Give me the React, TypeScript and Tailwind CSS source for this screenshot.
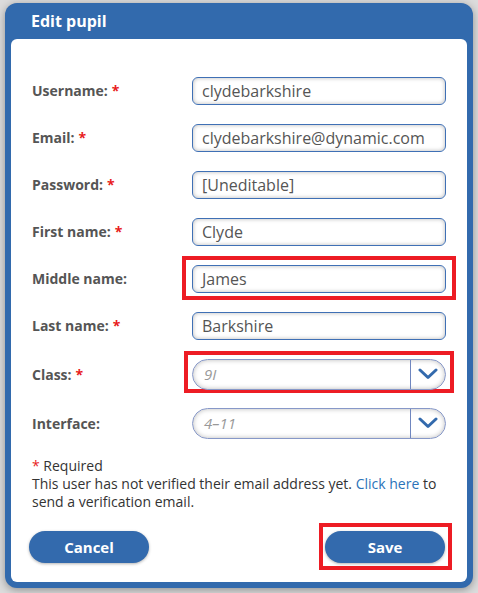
import React from "react";

const font = { fontFamily: "'Open Sans', 'Liberation Sans', sans-serif" };

function Star() {
  return <span className="text-[#e81c1c] ml-[4px]">*</span>;
}

function TextRow({ label, value, required, boxed }: { label: string; value: string; required?: boolean; boxed?: boolean }) {
  return (
    <div className="h-[47px] flex items-center">
      <div className="w-[160px] text-[14px] font-bold text-[#555]">
        {label}
        {required && <Star />}
      </div>
      <div className="relative">
        {boxed && <span className="absolute left-[-10px] right-[-10px] top-[-9px] bottom-[-7px] border-[4px] border-[#ed1c24]" />}
        <div className="relative w-[254px] h-[28px] rounded-[6px] border border-[#3f70b5] bg-white shadow-[inset_0_0_4px_rgba(0,0,0,0.28)] pl-[9px] flex items-center text-[16px] text-[#555]">
          {value}
        </div>
      </div>
    </div>
  );
}

function SelectRow({ label, value, required, boxed, h }: { label: string; value: string; required?: boolean; boxed?: boolean; h: string }) {
  return (
    <div className={`${h} flex items-center`}>
      <div className="w-[160px] text-[14px] font-bold text-[#555]">
        {label}
        {required && <Star />}
      </div>
      <div className="relative">
        {boxed && <span className="absolute left-[-8px] right-[-8px] top-[-8px] bottom-[-3px] border-[4px] border-[#ed1c24]" />}
        <div className="relative w-[254px] h-[31px] rounded-full border border-[#8798c8] bg-white shadow-[inset_0_0_5px_rgba(0,0,0,0.28)] flex items-center">
          <div className="flex-1 pl-[11px] text-[15px] italic text-[#999]">{value}</div>
          <div className="w-[35px] h-full border-l border-[#6f86bf] flex items-center justify-center">
            <svg width="20" height="12" viewBox="0 0 20 12">
              <path d="M2 2 L10 9.5 L18 2" fill="none" stroke="#336aad" strokeWidth="3" strokeLinecap="round" strokeLinejoin="round" />
            </svg>
          </div>
        </div>
      </div>
    </div>
  );
}

export default function App() {
  return (
    <div className="w-[478px] h-[593px] bg-[#dcdcdc] pt-[3px] pl-[5px] overflow-hidden" style={font}>
      <div className="w-[468px] h-[585px] bg-[#326aad] rounded-[12px] px-[6px] pb-[6px] flex flex-col shadow-[0_2px_8px_rgba(0,0,0,0.35)]">
        <div className="h-[36px] flex items-center pl-[20px] text-[16px] font-bold text-white">Edit pupil</div>
        <div className="flex-1 bg-white rounded-[6px] pl-[21px] pt-[28px] flex flex-col">
          <TextRow label="Username:" value="clydebarkshire" required />
          <TextRow label="Email:" value="clydebarkshire@dynamic.com" required />
          <TextRow label="Password:" value="[Uneditable]" required />
          <TextRow label="First name:" value="Clyde" required />
          <TextRow label="Middle name:" value="James" boxed />
          <TextRow label="Last name:" value="Barkshire" required />
          <SelectRow label="Class:" value="9I" required boxed h="h-[50px]" />
          <SelectRow label="Interface:" value="4–11" h="h-[48px]" />
          <div className="mt-[10px] text-[14px] leading-[18px] text-[#333] pr-[20px]">
            <p>
              <span className="text-[#e81c1c]">*</span> Required
            </p>
            <p>
              This user has not verified their email address yet. <a className="text-[#2b73b9]">Click here</a> to send a verification email.
            </p>
          </div>
          <div className="mt-[20px] flex justify-between pr-[22px] -ml-[3px]">
            <button className="w-[120px] h-[32px] rounded-full bg-[#336aad] text-white font-bold text-[15px] shadow-[0_1px_3px_rgba(0,0,0,0.3)]">Cancel</button>
            <div className="relative">
              <span className="absolute left-[-6px] right-[-7px] top-[-8px] bottom-[-7px] border-[4px] border-[#ed1c24]" />
              <button className="relative w-[120px] h-[32px] rounded-full bg-[#336aad] text-white font-bold text-[15px] shadow-[0_1px_3px_rgba(0,0,0,0.3)]">Save</button>
            </div>
          </div>
        </div>
      </div>
    </div>
  );
}
